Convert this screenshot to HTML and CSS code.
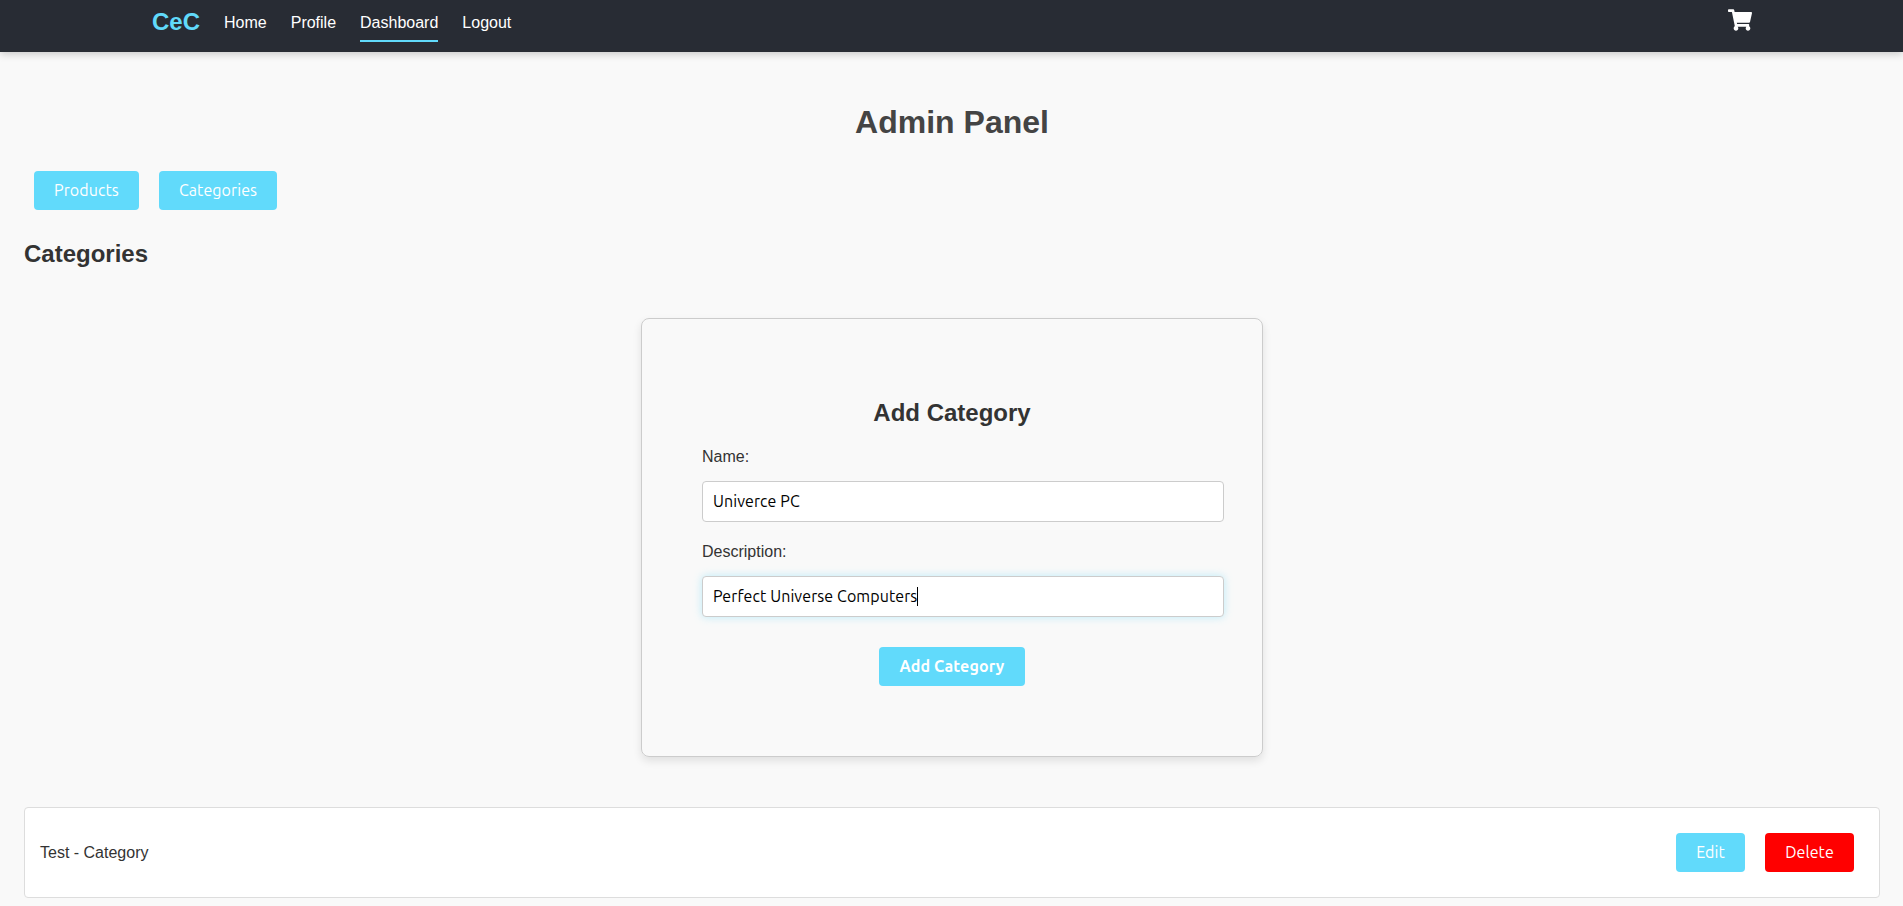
FILE: index.html
```html
<!DOCTYPE html>
<html lang="en">
<head>
<meta charset="utf-8">
<title>Admin Panel</title>
<link rel="stylesheet" href="styles.css">
</head>
<body>
<header class="navbar">
  <nav class="nav-inner">
    <a class="logo">CeC</a>
    <a class="nav-link">Home</a>
    <a class="nav-link">Profile</a>
    <a class="nav-link active">Dashboard</a>
    <a class="nav-link">Logout</a>
    <svg class="cart" viewBox="0 0 576 512" fill="currentColor"><path d="M528.12 301.319l47.273-208C578.806 78.301 567.391 64 551.99 64H159.208l-9.166-44.81C147.758 8.021 137.93 0 126.529 0H24C10.745 0 0 10.745 0 24v16c0 13.255 10.745 24 24 24h69.883l70.248 343.435C147.325 417.1 136 435.222 136 456c0 30.928 25.072 56 56 56s56-25.072 56-56c0-15.674-6.447-29.835-16.824-40h209.647C430.447 426.165 424 440.326 424 456c0 30.928 25.072 56 56 56s56-25.072 56-56c0-22.172-12.888-41.332-31.579-50.405l5.517-24.276c3.413-15.018-8.002-29.319-23.403-29.319H218.117l-6.545-32h293.145c11.206 0 20.92-7.754 23.403-18.681z"/></svg>
  </nav>
</header>
<main class="panel">
  <h1 class="title">Admin Panel</h1>
  <div class="tabs">
    <button class="btn products">Products</button>
    <button class="btn categories">Categories</button>
  </div>
  <h2 class="subtitle">Categories</h2>
  <form class="card">
    <h2 class="card-title">Add Category</h2>
    <label class="label" for="name">Name:</label>
    <input class="input" id="name" value="Univerce PC">
    <label class="label" for="description">Description:</label>
    <div class="input focused" id="description"><span>Perfect Universe Computers</span><i class="caret"></i></div>
    <button class="btn submit" type="button">Add Category</button>
  </form>
  <div class="item">
    <span class="item-name">Test - Category</span>
    <button class="btn edit">Edit</button>
    <button class="btn delete">Delete</button>
  </div>
</main>
</body>
</html>
```
FILE: styles.css
```css
* { box-sizing: border-box; }
body {
  margin: 0;
  height: 906px;
  overflow: hidden;
  background: #f9f9f9;
  color: #333;
  font: 16px/18px "Liberation Sans", Arial, sans-serif;
}
.navbar {
  height: 52px;
  padding-left: 1px;
  background: #282c34;
  box-shadow: 0 2px 8px rgba(0, 0, 0, .2);
}
.nav-inner {
  display: flex;
  align-items: flex-start;
  gap: 24px;
  width: 1600px;
  margin: 0 auto;
}
.logo {
  padding-top: 8px;
  color: #61dafb;
  font-size: 24px;
  line-height: 27px;
  font-weight: bold;
}
.nav-link {
  height: 42px;
  padding-top: 14px;
  color: #fff;
}
.active { border-bottom: 2px solid #61dafb; }
.cart {
  width: 24px;
  height: 24px;
  margin: 8px 0 0 auto;
  color: #fff;
}
.panel { padding: 48px 23px 0 24px; }
.title {
  margin: 0;
  padding-top: 4px;
  color: #444;
  font-size: 32px;
  line-height: 36px;
  text-align: center;
}
.tabs {
  display: flex;
  gap: 20px;
  margin-top: 31px;
  padding-left: 10px;
}
.btn {
  height: 39px;
  padding: 0 0 1px;
  border: 0;
  border-radius: 4px;
  background: #61dafb;
  color: #fff;
  font: 16px/18px "Ubuntu", "Noto Sans", sans-serif;
  letter-spacing: .08px;
  text-align: center;
  white-space: nowrap;
}
.products { width: 105px; }
.categories { width: 118px; }
.subtitle {
  margin: 30px 0 0;
  font-size: 24px;
  line-height: 27px;
}
.card {
  display: flex;
  flex-direction: column;
  width: 622px;
  height: 439px;
  margin: 51px auto 50px;
  padding: 80px 38px 0 60px;
  border: 1px solid #ccc;
  border-radius: 8px;
  box-shadow: 0 4px 8px rgba(0, 0, 0, .1);
}
.card-title {
  margin: 0 22px 22px 0;
  font-size: 24px;
  line-height: 27px;
  text-align: center;
}
.label {
  height: 18px;
  margin-bottom: 15px;
}
.input {
  display: flex;
  align-items: center;
  width: 522px;
  height: 41px;
  margin-bottom: 21px;
  padding: 0 10px 1px;
  border: 1px solid #ccc;
  border-radius: 4px;
  background: #fff;
  color: #000;
  font: 16px/19px "Ubuntu", "Noto Sans", sans-serif;
  letter-spacing: .09px;
}
.focused {
  margin-bottom: 30px;
  padding-bottom: 0;
  box-shadow: 0 0 8px rgba(97, 218, 251, .4);
}
.caret {
  width: 1px;
  height: 19px;
  background: #000;
}
.submit {
  width: 146px;
  margin-left: 177px;
  font-weight: bold;
  letter-spacing: .12px;
}
.item {
  display: flex;
  align-items: center;
  height: 91px;
  padding: 0 25px 0 15px;
  border: 1px solid #ddd;
  border-radius: 4px;
  background: #fff;
}
.item-name { margin-right: auto; }
.edit { width: 69px; margin-right: 20px; }
.delete { width: 89px; background: red; }
```
